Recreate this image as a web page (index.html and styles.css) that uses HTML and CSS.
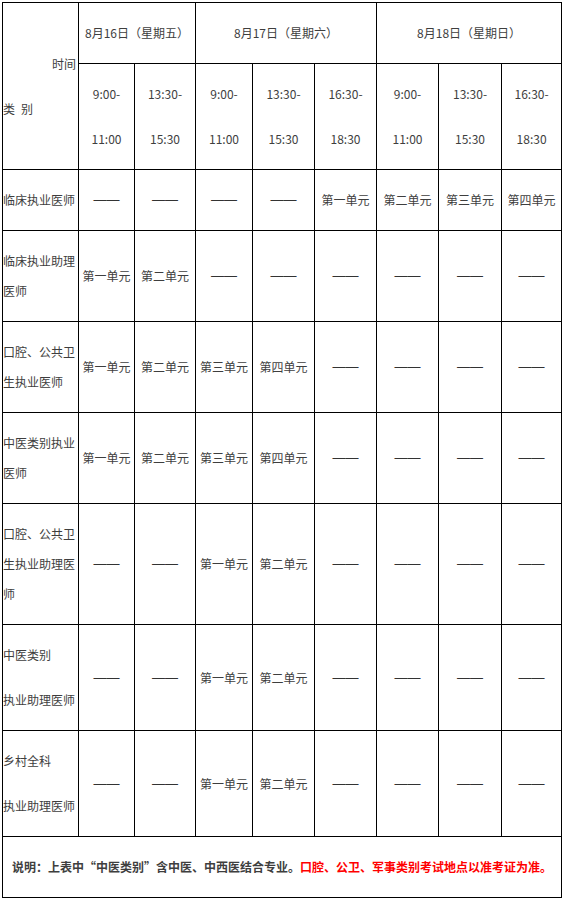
FILE: index.html
```html
<!DOCTYPE html>
<html lang="zh-CN">
<head>
<meta charset="utf-8">
<title>考试时间安排</title>
<link rel="stylesheet" href="styles.css">
</head>
<body>
<table class="schedule">
  <colgroup>
    <col class="c0"><col class="c1"><col class="c2"><col class="c3"><col class="c4"><col class="c5"><col class="c6"><col class="c7"><col class="c8">
  </colgroup>
  <tr>
    <td rowspan="2" class="corner"><p class="right">时间</p><p class="left">类&ensp;别</p></td>
    <td colspan="2"><p>8月16日（星期五）</p></td>
    <td colspan="3"><p>8月17日（星期六）</p></td>
    <td colspan="3"><p>8月18日（星期日）</p></td>
  </tr>
  <tr>
    <td><p>9:00-</p><p>11:00</p></td>
    <td><p>13:30-</p><p>15:30</p></td>
    <td><p>9:00-</p><p>11:00</p></td>
    <td><p>13:30-</p><p>15:30</p></td>
    <td><p>16:30-</p><p>18:30</p></td>
    <td><p>9:00-</p><p>11:00</p></td>
    <td><p>13:30-</p><p>15:30</p></td>
    <td><p>16:30-</p><p>18:30</p></td>
  </tr>
  <tr>
    <td class="label"><p>临床执业医师</p></td>
    <td><p class="dash">——</p></td><td><p class="dash">——</p></td><td><p class="dash">——</p></td><td><p class="dash">——</p></td>
    <td><p>第一单元</p></td><td><p>第二单元</p></td><td><p>第三单元</p></td><td><p>第四单元</p></td>
  </tr>
  <tr>
    <td class="label"><p>临床执业助理医师</p></td>
    <td><p>第一单元</p></td><td><p>第二单元</p></td>
    <td><p class="dash">——</p></td><td><p class="dash">——</p></td><td><p class="dash">——</p></td><td><p class="dash">——</p></td><td><p class="dash">——</p></td><td><p class="dash">——</p></td>
  </tr>
  <tr>
    <td class="label"><p>口腔、公共卫生执业医师</p></td>
    <td><p>第一单元</p></td><td><p>第二单元</p></td><td><p>第三单元</p></td><td><p>第四单元</p></td>
    <td><p class="dash">——</p></td><td><p class="dash">——</p></td><td><p class="dash">——</p></td><td><p class="dash">——</p></td>
  </tr>
  <tr>
    <td class="label"><p>中医类别执业医师</p></td>
    <td><p>第一单元</p></td><td><p>第二单元</p></td><td><p>第三单元</p></td><td><p>第四单元</p></td>
    <td><p class="dash">——</p></td><td><p class="dash">——</p></td><td><p class="dash">——</p></td><td><p class="dash">——</p></td>
  </tr>
  <tr>
    <td class="label"><p>口腔、公共卫生执业助理医师</p></td>
    <td><p class="dash">——</p></td><td><p class="dash">——</p></td>
    <td><p>第一单元</p></td><td><p>第二单元</p></td>
    <td><p class="dash">——</p></td><td><p class="dash">——</p></td><td><p class="dash">——</p></td><td><p class="dash">——</p></td>
  </tr>
  <tr>
    <td class="label"><p>中医类别</p><p>执业助理医师</p></td>
    <td><p class="dash">——</p></td><td><p class="dash">——</p></td>
    <td><p>第一单元</p></td><td><p>第二单元</p></td>
    <td><p class="dash">——</p></td><td><p class="dash">——</p></td><td><p class="dash">——</p></td><td><p class="dash">——</p></td>
  </tr>
  <tr>
    <td class="label"><p>乡村全科</p><p>执业助理医师</p></td>
    <td><p class="dash">——</p></td><td><p class="dash">——</p></td>
    <td><p>第一单元</p></td><td><p>第二单元</p></td>
    <td><p class="dash">——</p></td><td><p class="dash">——</p></td><td><p class="dash">——</p></td><td><p class="dash">——</p></td>
  </tr>
  <tr>
    <td colspan="9" class="note"><p><strong>说明：上表中“中医类别”含中医、中西医结合专业。</strong><strong class="red">口腔、公卫、军事类别考试地点以准考证为准。</strong></p></td>
  </tr>
</table>
</body>
</html>
```

FILE: styles.css
```css
html, body {
  margin: 0;
  padding: 0;
  background: #ffffff;
}

body {
  padding: 2px 0 0 2px;
  font-family: "Noto Sans CJK SC", "Microsoft YaHei", sans-serif;
  font-size: 12px;
  color: #3e3e3e;
}

.schedule {
  border-collapse: collapse;
  table-layout: fixed;
  width: 560px;
}

.c0 { width: 76px; }
.c1 { width: 56px; }
.c2 { width: 61px; }
.c3 { width: 57px; }
.c4 { width: 62px; }
.c5 { width: 62px; }
.c6 { width: 62px; }
.c7 { width: 63px; }
.c8 { width: 60px; }

.schedule td {
  border: 1px solid #000;
  padding: 0;
  text-align: center;
  vertical-align: middle;
  word-break: break-all;
}

.schedule p {
  margin: 15px 0;
  line-height: 30px;
}

.schedule p.dash {
  font-family: "Liberation Sans", sans-serif;
  font-size: 13px;
  color: #333333;
}

.schedule td.label {
  text-align: left;
}

.corner .right {
  text-align: right;
  padding-right: 2px;
}

.corner .left {
  text-align: left;
}

.note strong {
  font-weight: bold;
  color: #3e3e3e;
}

.note strong.red {
  color: #ff0000;
}
```
